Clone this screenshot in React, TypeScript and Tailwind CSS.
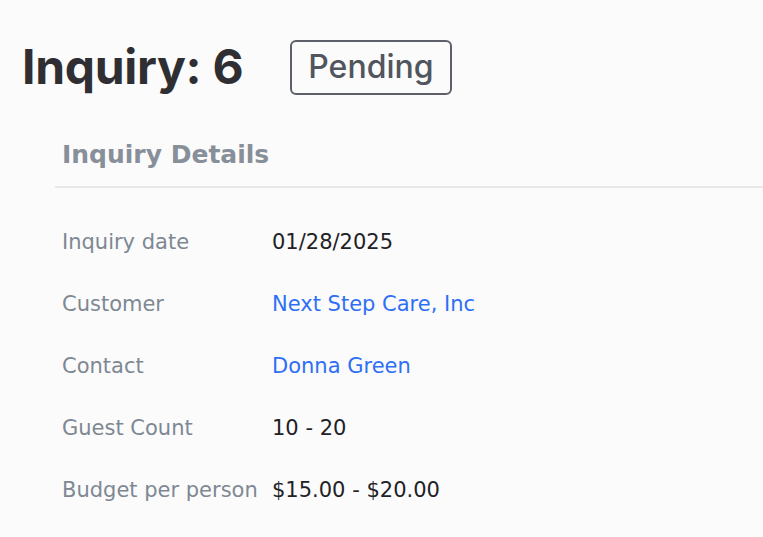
export default function App() {
  const rows: { label: string; value: string; link?: boolean }[] = [
    { label: "Inquiry date", value: "01/28/2025" },
    { label: "Customer", value: "Next Step Care, Inc", link: true },
    { label: "Contact", value: "Donna Green", link: true },
    { label: "Guest Count", value: "10 - 20" },
    { label: "Budget per person", value: "$15.00 - $20.00" },
  ];
  return (
    <div className="w-[763px] h-[537px] overflow-hidden bg-[#fbfbfb]">
      <div className="flex items-center pl-[22px] mt-[40px] h-[54px] gap-[47px]">
        <h1 className="font-['Inter',sans-serif] font-bold text-[48px] leading-none text-[#2f2f33] tracking-[-0.3px]">
          Inquiry: 6
        </h1>
        <span className="h-[55px] px-[16px] flex items-center rounded-[6px] border-2 border-[#5d6068] font-['Inter',sans-serif] font-medium text-[32px] text-[#51555e]">
          Pending
        </span>
      </div>
      <div className="ml-[55px] mt-[45px]">
        <h2 className="pl-[7px] font-['DejaVu_Sans',sans-serif] font-bold text-[25px] text-[#878f99] leading-[32px] pb-[15px] border-b-2 border-[#e8e8e8]">
          Inquiry Details
        </h2>
        <div className="pl-[7px] pt-[39px] flex flex-col gap-[32px] font-['DejaVu_Sans',sans-serif] text-[21px] leading-[30px]">
          {rows.map((r) => (
            <div key={r.label} className="flex">
              <span className="w-[210px] text-[#7e8893]">{r.label}</span>
              <span className={r.link ? "text-[#2f6ff6]" : "text-[#222226]"}>{r.value}</span>
            </div>
          ))}
        </div>
      </div>
    </div>
  );
}
